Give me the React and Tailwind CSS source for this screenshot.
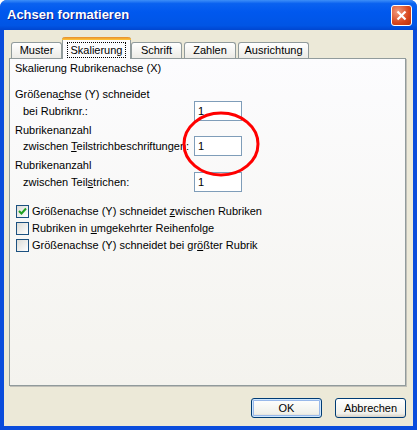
import React from "react";

const font = { fontFamily: '"Liberation Sans", Arial, sans-serif' };

function Tab({ label, w, selected, className = "" }) {
  if (selected) {
    return (
      <div
        className={`relative z-10 -mb-px h-[22px] flex flex-col border-x border-[#919B9C] bg-[#FCFCFE] rounded-t-[3px] ${w} ${className}`}
      >
        <div className="h-[3px] -mx-px rounded-t-[3px] bg-[linear-gradient(to_bottom,#E68B2C,#FFC73C)]" />
        <div className="flex-1 flex items-center justify-center">
          <span className="px-[3px] leading-[14px] outline outline-1 outline-dotted outline-black">{label}</span>
        </div>
      </div>
    );
  }
  return (
    <div
      className={`h-[16px] flex items-center justify-center border-x border-t border-[#919B9C] rounded-t-[3px] bg-[linear-gradient(to_bottom,#FFFFFF,#ECEBE6)] ${w} ${className}`}
    >
      {label}
    </div>
  );
}

function Field({ children }) {
  return (
    <div className="flex items-center h-[20px]">
      <div className="w-[179px] pl-[8px]">{children}</div>
      <div className="w-[48px] h-[20px] border border-[#7F9DB9] bg-white flex items-center pl-[3px]">1</div>
    </div>
  );
}

function Check({ checked, children }) {
  return (
    <div className="flex items-center h-[16px] gap-[3px] pl-[1px]">
      <div className="w-[13px] h-[13px] border border-[#1C5180] bg-[linear-gradient(135deg,#DCDCD7,#FFFFFF)] flex items-center justify-center">
        {checked && (
          <svg width="9" height="9" viewBox="0 0 9 9">
            <path d="M1 4 L3.5 6.5 L8 1.5" stroke="#21A121" strokeWidth="2" fill="none" />
          </svg>
        )}
      </div>
      <span>{children}</span>
    </div>
  );
}

function Button({ children, def }) {
  return (
    <div
      className={`w-[71px] h-[20px] rounded-[3px] border border-[#003C74] flex items-center justify-center bg-[linear-gradient(to_bottom,#FFFFFF,#F0F0EA_80%,#D6D0C5)] ${
        def ? "shadow-[inset_0_0_0_1px_#CEE7FF,inset_0_0_0_2px_#98B8EA]" : ""
      }`}
    >
      {children}
    </div>
  );
}

export default function App() {
  return (
    <div
      className="w-[417px] h-[430px] flex flex-col bg-[#0A4CDC] rounded-t-[7px] text-[11px] text-black overflow-hidden"
      style={font}
    >
      {/* title bar */}
      <div className="h-[30px] flex items-center justify-between pl-[7px] pr-[5px] bg-[linear-gradient(to_bottom,#3D8FF8_0%,#0A62F0_12%,#0058EE_40%,#0055E5_85%,#0046D0_100%)]">
        <span className="text-white font-bold text-[13px] [text-shadow:1px_1px_#0A1A8A]">
          Achsen formatieren
        </span>
        <div className="w-[21px] h-[21px] rounded-[3px] border border-white flex items-center justify-center bg-[radial-gradient(circle_at_30%_30%,#F19A7E,#D8461C_60%,#B8300C)]">
          <svg width="11" height="11" viewBox="0 0 11 11">
            <path d="M1.5 1.5 L9.5 9.5 M9.5 1.5 L1.5 9.5" stroke="white" strokeWidth="2.2" />
          </svg>
        </div>
      </div>

      {/* body */}
      <div className="flex-1 mx-[4px] mb-[4px] bg-[#ECE9D8] flex flex-col pl-[5px] pr-[7px]">
        <div className="h-[28px] flex items-end pl-[2px]">
          <Tab label="Muster" w="w-[51px]" />
          <Tab label="Skalierung" w="w-[69px]" selected />
          <Tab label="Schrift" w="w-[51px]" />
          <Tab label="Zahlen" w="w-[52px]" className="ml-[2px]" />
          <Tab label="Ausrichtung" w="w-[71px]" className="ml-[2px]" />
        </div>

        <div className="relative h-[328px] border border-[#919B9C] shadow-[1px_1px_0_#C0BFB8] bg-[linear-gradient(to_bottom,#FCFCFE,#F4F3EE)] flex flex-col pl-[5px]">
          <div className="mt-[3px] h-[13px] leading-[13px]">Skalierung Rubrikenachse (X)</div>

          <div className="mt-[13px] h-[13px] leading-[13px]">
            Größena<u>c</u>hse (Y) schneidet
          </div>
          <Field>bei Rubriknr.:</Field>

          <div className="mt-[3px] h-[13px] leading-[13px]">Rubrikenanzahl</div>
          <div className="-mt-px">
            <Field>
              zwischen <u>T</u>eilstrichbeschriftungen:
            </Field>
          </div>

          <div className="mt-[3px] h-[13px] leading-[13px]">Rubrikenanzahl</div>
          <Field>
            zwischen Teil<u>s</u>trichen:
          </Field>

          <div className="mt-[11px] flex flex-col gap-[1px]">
            <Check checked>
              Größenachse (Y) schneidet <u>z</u>wischen Rubriken
            </Check>
            <Check>
              Rubriken in <u>u</u>mgekehrter Reihenfolge
            </Check>
            <Check>
              Größenachse (Y) schneidet bei gr<u>ö</u>ßter Rubrik
            </Check>
          </div>

          {/* red marker circle */}
          <svg
            className="absolute left-[170px] top-[50px]"
            width="82"
            height="70"
            viewBox="0 0 82 70"
          >
            <ellipse cx="41" cy="35" rx="37" ry="31" stroke="#FF0000" strokeWidth="3" fill="none" />
          </svg>
        </div>

        <div className="mt-[12px] flex justify-end gap-[13px]">
          <Button def>OK</Button>
          <Button>Abbrechen</Button>
        </div>
      </div>
    </div>
  );
}
